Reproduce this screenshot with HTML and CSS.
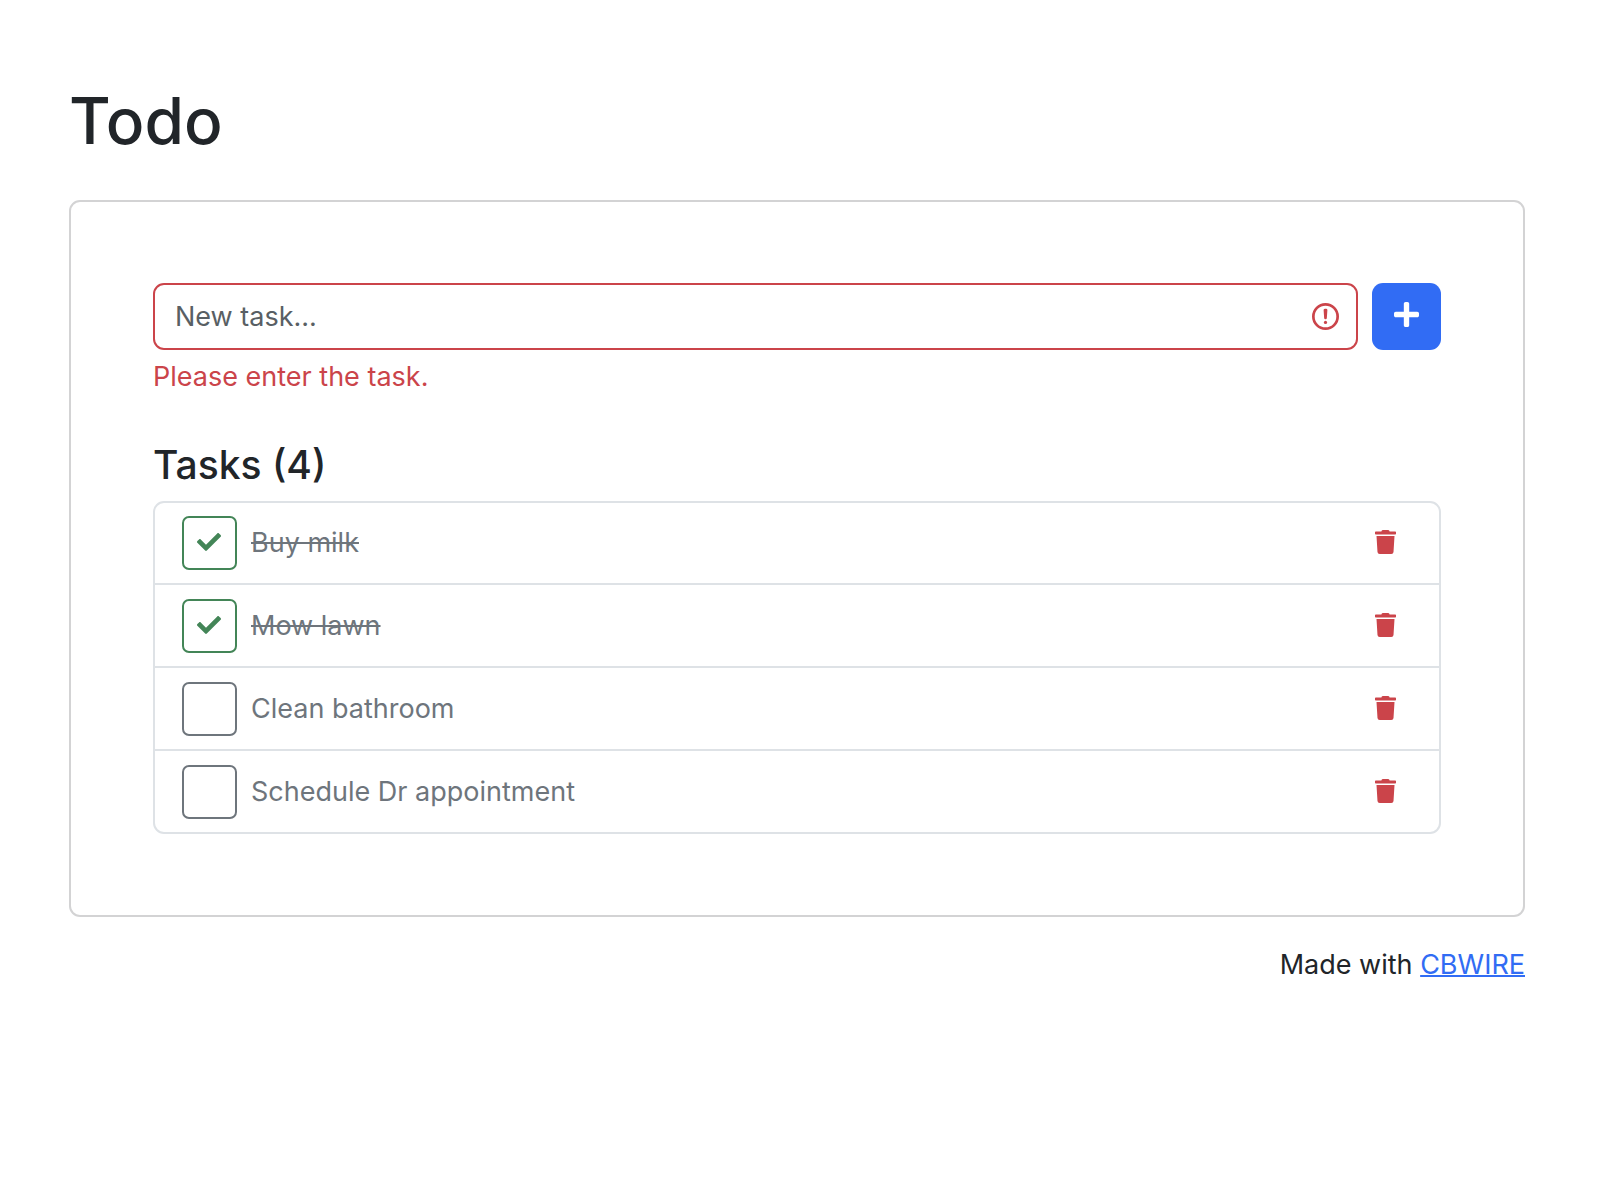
FILE: index.html
```html
<!DOCTYPE html>
<html lang="en">
<head>
<meta charset="utf-8">
<title>Todo</title>
<meta name="viewport" content="width=device-width, initial-scale=1">
<link rel="stylesheet" href="styles.css">
</head>
<body>
<svg class="sprite" aria-hidden="true">
  <symbol id="check" viewBox="0 0 512 512"><path d="M173.898 439.404l-166.4-166.4c-9.997-9.997-9.997-26.206 0-36.204l36.203-36.204c9.997-9.998 26.207-9.998 36.204 0L192 312.69 432.095 72.596c9.997-9.997 26.207-9.997 36.204 0l36.203 36.204c9.997 9.997 9.997 26.206 0 36.204l-294.4 294.401c-9.998 9.997-26.207 9.997-36.204-.001z"/></symbol>
  <symbol id="trash" viewBox="0 0 448 512"><path d="M432 32H312l-9.4-18.7A24 24 0 0 0 281.1 0H166.8a23.72 23.72 0 0 0-21.4 13.3L136 32H16A16 16 0 0 0 0 48v32a16 16 0 0 0 16 16h416a16 16 0 0 0 16-16V48a16 16 0 0 0-16-16zM53.2 467a48 48 0 0 0 47.9 45h245.8a48 48 0 0 0 47.9-45L416 128H32z"/></symbol>
</svg>
<main class="container">
  <h1 class="title">Todo</h1>
  <section class="card">
    <form class="new-task" novalidate>
      <div class="field">
        <input class="field-input" type="text" placeholder="New task..." aria-label="New task" aria-invalid="true" aria-describedby="task-error">
        <svg class="field-icon" viewBox="1 1 10 10" fill="none" stroke="currentColor" aria-hidden="true"><circle cx="6" cy="6" r="4.5"/><path stroke-linejoin="round" d="M5.8 3.6h.4L6 6.5z"/><circle cx="6" cy="8.2" r=".6" fill="currentColor" stroke="none"/></svg>
      </div>
      <button class="add" type="button" aria-label="Add task"><svg class="add-icon" viewBox="0 0 448 448" aria-hidden="true"><path d="M416 176H272V32c0-17.67-14.33-32-32-32h-32c-17.67 0-32 14.33-32 32v144H32c-17.67 0-32 14.33-32 32v32c0 17.67 14.33 32 32 32h144v144c0 17.67 14.33 32 32 32h32c17.67 0 32-14.33 32-32V272h144c17.67 0 32-14.33 32-32v-32c0-17.67-14.33-32-32-32z"/></svg></button>
    </form>
    <p class="error" id="task-error">Please enter the task.</p>
    <h2 class="subtitle">Tasks (4)</h2>
    <ul class="tasks">
      <li class="task">
        <label class="task-label"><span class="box"><input class="box-input" type="checkbox" checked><svg class="box-icon" aria-hidden="true"><use href="#check"/></svg></span><span class="task-name">Buy milk</span></label>
        <button class="delete" type="button" aria-label="Delete Buy milk"><svg class="delete-icon" aria-hidden="true"><use href="#trash"/></svg></button>
      </li>
      <li class="task">
        <label class="task-label"><span class="box"><input class="box-input" type="checkbox" checked><svg class="box-icon" aria-hidden="true"><use href="#check"/></svg></span><span class="task-name">Mow lawn</span></label>
        <button class="delete" type="button" aria-label="Delete Mow lawn"><svg class="delete-icon" aria-hidden="true"><use href="#trash"/></svg></button>
      </li>
      <li class="task">
        <label class="task-label"><span class="box"><input class="box-input" type="checkbox"><svg class="box-icon" aria-hidden="true"><use href="#check"/></svg></span><span class="task-name">Clean bathroom</span></label>
        <button class="delete" type="button" aria-label="Delete Clean bathroom"><svg class="delete-icon" aria-hidden="true"><use href="#trash"/></svg></button>
      </li>
      <li class="task">
        <label class="task-label"><span class="box"><input class="box-input" type="checkbox"><svg class="box-icon" aria-hidden="true"><use href="#check"/></svg></span><span class="task-name">Schedule Dr appointment</span></label>
        <button class="delete" type="button" aria-label="Delete Schedule Dr appointment"><svg class="delete-icon" aria-hidden="true"><use href="#trash"/></svg></button>
      </li>
    </ul>
  </section>
  <footer class="footer">Made with <a class="link" href="#">CBWIRE</a></footer>
</main>
</body>
</html>
```
FILE: styles.css
```css
*, *::before, *::after { box-sizing: border-box; }

:root {
  --text: #212529;
  --muted: #6e757c;
  --red: #cb444a;
  --green: #438557;
  --blue: #316cf4;
  --line: #dee2e6;
}

body {
  margin: 0;
  background: #fff;
  color: var(--text);
  font: 400 27px/40px Inter, "Liberation Sans", sans-serif;
}

.sprite { display: none; }

.container { padding: 81px 75px 81px 69px; }

.title {
  margin: 0 0 39px;
  font-size: 64px;
  line-height: 80px;
  font-weight: 500;
}

.card {
  padding: 81px 82px;
  border: 2px solid #d3d3d4;
  border-radius: 11px;
}

.new-task { display: flex; gap: 14px; }

.field {
  flex: 1;
  display: grid;
  grid-template-columns: 1fr;
  align-items: center;
}

.field-input {
  grid-area: 1 / 1;
  width: 100%;
  height: 67px;
  padding: 0 72px 0 20px;
  border: 2px solid var(--red);
  border-radius: 11px;
  background: #fff;
  color: var(--text);
  font: inherit;
}

.field-input::placeholder { color: #595f64; opacity: 1; }

.field-icon {
  grid-area: 1 / 1;
  justify-self: end;
  width: 27px;
  height: 27px;
  margin-right: 19px;
  color: var(--red);
  pointer-events: none;
}

.add {
  display: flex;
  align-items: center;
  justify-content: center;
  width: 69px;
  height: 67px;
  padding: 0 0 4px;
  border: 0;
  border-radius: 11px;
  background: var(--blue);
  color: #fff;
}

.add-icon { width: 25px; height: 25px; fill: currentColor; }

.error { margin: 7px 0 0; color: var(--red); }

.subtitle {
  margin: 44px 0 12px;
  font-size: 39px;
  line-height: 48px;
  font-weight: 500;
}

.tasks {
  margin: 0;
  padding: 0;
  list-style: none;
  border: 2px solid var(--line);
  border-radius: 11px;
}

.task {
  display: flex;
  align-items: center;
  justify-content: space-between;
  padding: 13px 27px;
}

.task + .task {
  padding-top: 14px;
  border-top: 2px solid var(--line);
}

.task-label {
  display: flex;
  align-items: center;
  gap: 14px;
  color: var(--muted);
}

.box { display: grid; place-items: center; }

.box-input {
  grid-area: 1 / 1;
  appearance: none;
  width: 55px;
  height: 54px;
  margin: 0;
  border: 2px solid var(--muted);
  border-radius: 7px;
}

.box-icon {
  grid-area: 1 / 1;
  width: 24px;
  height: 24px;
  margin: 0 1px 2px 0;
  fill: var(--green);
  visibility: hidden;
  pointer-events: none;
}

.box-input:checked { border-color: var(--green); }
.box-input:checked + .box-icon { visibility: visible; }
.task-label:has(:checked) .task-name { text-decoration: line-through 2px; }

.delete {
  display: flex;
  padding: 14px 16px 16px;
  border: 0;
  background: none;
  color: var(--red);
}

.delete-icon { width: 21px; height: 24px; fill: currentColor; }

.footer { margin-top: 28px; text-align: right; }

.link { color: var(--blue); text-decoration: underline 2px; }
```
